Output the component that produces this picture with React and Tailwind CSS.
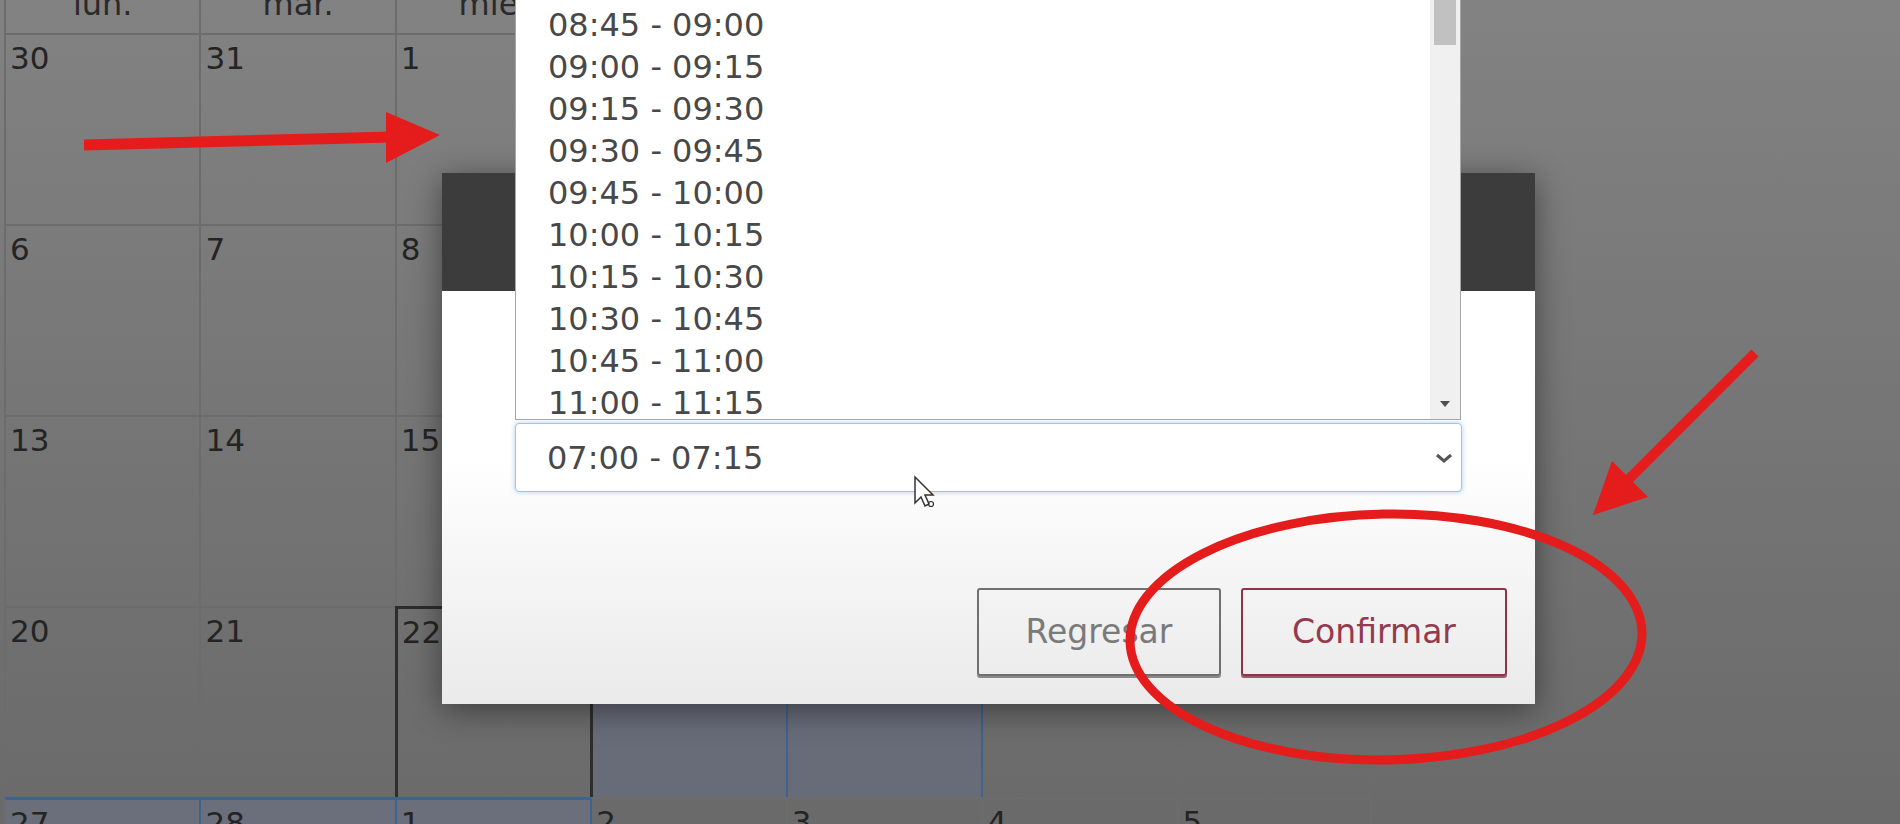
import React from 'react';

const headers = ['lun.', 'mar.', 'mié.', 'jue.', 'vie.', 'sáb.', 'dom.'];

// days of the month grid (feb, starting on wednesday)
const days = [
  30, 31, 1, 2, 3, 4, 5,
  6, 7, 8, 9, 10, 11, 12,
  13, 14, 15, 16, 17, 18, 19,
  20, 21, 22, 23, 24, 25, 26,
  27, 28, 1, 2, 3, 4, 5,
];

// extra classes for the highlighted cells
const special = {
  23: 'border-l-[#2d2d2d] border-t-[#2d2d2d] border-l-[3px] border-t-[3px]',
  24: 'bg-[#686c79] border-l-[#2d2d2d] border-l-[3px]',
  25: 'bg-[#686c79] border-l-[#3f6290]',
  26: 'border-l-[#3f6290]',
  28: 'bg-[#6b6f7b] border-t-[#3f6290] border-t-[3px]',
  29: 'bg-[#6b6f7b] border-t-[#3f6290] border-l-[#3f6290] border-t-[3px]',
  30: 'bg-[#6b6f7b] border-t-[#3f6290] border-l-[#3f6290] border-t-[3px]',
  31: 'border-l-[#3f6290]',
};

const slots = [
  '08:45 - 09:00',
  '09:00 - 09:15',
  '09:15 - 09:30',
  '09:30 - 09:45',
  '09:45 - 10:00',
  '10:00 - 10:15',
  '10:15 - 10:30',
  '10:30 - 10:45',
  '10:45 - 11:00',
  '11:00 - 11:15',
];

const Calendar = () => (
  <div className="ml-[4px] w-[1368px]">
    <div className="grid h-[33px] grid-cols-7 overflow-hidden">
      {headers.map((h, i) => (
        <div
          key={h}
          className={`border-l-2 border-[#6c6c6c] text-center ${i === 6 ? 'border-r-2' : ''}`}
        >
          <div className="mt-[-12px] text-[32px] leading-none text-[#2a2a2a]">{h}</div>
        </div>
      ))}
    </div>
    <div className="grid grid-cols-7 grid-rows-[repeat(5,191px)]">
      {days.map((d, i) => (
        <div
          key={i}
          className={`border-l-2 border-t-2 border-[#6c6c6c] pl-[4px] pt-[8px] text-[31px] leading-none text-[#242424] ${
            i % 7 === 6 ? 'border-r-2' : ''
          } ${special[i] || ''}`}
        >
          {d}
        </div>
      ))}
    </div>
  </div>
);

const Modal = () => (
  <div className="absolute left-[442px] top-[173px] flex h-[531px] w-[1093px] flex-col shadow-[0_6px_30px_rgba(0,0,0,0.45)]">
    <div className="h-[118px] bg-[#3c3c3c]" />
    <div className="flex flex-1 flex-col bg-linear-to-b from-white from-40% to-[#eaeaea] px-[73px] pt-[132px]">
      <div className="flex h-[69px] items-center justify-between rounded-[4px] border border-[#9fc3ea] bg-white pl-[31px] pr-[8px] shadow-[0_0_5px_rgba(110,165,230,0.55)]">
        <span className="text-[32px] leading-none text-[#484848]">07:00 - 07:15</span>
        <svg width="18" height="12" viewBox="0 0 18 12">
          <polyline points="2,3 9,9 16,3" fill="none" stroke="#555" strokeWidth="3" />
        </svg>
      </div>
      <div className="mr-[-45px] mt-[96px] flex justify-end gap-[20px]">
        <button className="h-[88px] w-[244px] rounded-[3px] border-2 border-[#707070] text-[33px] text-[#7a7a7a] shadow-[0_2px_0_#8a8a8a]">
          Regresar
        </button>
        <button className="h-[88px] w-[266px] rounded-[3px] border-2 border-[#8e3447] text-[33px] text-[#943a4f] shadow-[0_2px_0_#9a5a68]">
          Confirmar
        </button>
      </div>
    </div>
  </div>
);

const Listbox = () => (
  <div className="absolute left-[515px] top-0 flex h-[420px] w-[946px] border-x border-b border-[#a6a6a6] bg-white">
    <div className="flex-1 pl-[32px] pt-[4px]">
      {slots.map((s) => (
        <div key={s} className="h-[42px] text-[32px] leading-[42px] text-[#484848]">
          {s}
        </div>
      ))}
    </div>
    <div className="relative w-[30px] bg-[#f0f0f0]">
      <div className="mx-[4px] h-[45px] bg-[#c1c1c1]" />
      <svg className="absolute bottom-[12px] left-[10px]" width="10" height="6" viewBox="0 0 10 6">
        <polygon points="0,0 10,0 5,6" fill="#4f4f4f" />
      </svg>
    </div>
  </div>
);

const Annotations = () => (
  <svg className="pointer-events-none absolute left-0 top-0" width="1900" height="824" viewBox="0 0 1900 824">
    {/* arrow pointing at the list */}
    <line x1="84" y1="145" x2="392" y2="137" stroke="#e41c1c" strokeWidth="11" />
    <polygon points="386,112 440,135 386,163" fill="#e41c1c" />
    {/* arrow pointing at confirm */}
    <line x1="1755" y1="353" x2="1626" y2="482" stroke="#e41c1c" strokeWidth="10" />
    <polygon points="1612,461 1648,497 1593,515" fill="#e41c1c" />
    <ellipse cx="1386" cy="637" rx="256" ry="123" fill="none" stroke="#e41c1c" strokeWidth="9" transform="rotate(-1 1386 637)" />
    {/* mouse cursor */}
    <g transform="translate(915 477)">
      <polygon points="0,0 0,26 6,20 10,29 14,27 10,18 18,18" fill="#fff" stroke="#333" strokeWidth="1.5" />
      <circle cx="16" cy="27" r="2.5" fill="none" stroke="#333" strokeWidth="1.2" />
    </g>
  </svg>
);

const App = () => {
  return (
    <div className="relative h-[824px] w-[1900px] overflow-hidden bg-linear-to-b from-[#828282] to-[#6a6a6a] font-['DejaVu_Sans',sans-serif]">
      <Calendar />
      <Modal />
      <Listbox />
      <Annotations />
    </div>
  );
};

export default App;
